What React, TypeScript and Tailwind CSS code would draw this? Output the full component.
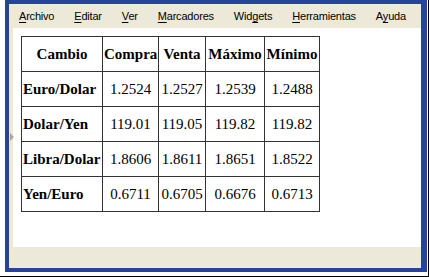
const menu: { label: string; key: number }[] = [
  { label: 'Archivo', key: 0 },
  { label: 'Editar', key: 0 },
  { label: 'Ver', key: 0 },
  { label: 'Marcadores', key: 0 },
  { label: 'Widgets', key: 3 },
  { label: 'Herramientas', key: 0 },
  { label: 'Ayuda', key: 1 },
];

const rows = [
  ['Euro/Dolar', '1.2524', '1.2527', '1.2539', '1.2488'],
  ['Dolar/Yen', '119.01', '119.05', '119.82', '119.82'],
  ['Libra/Dolar', '1.8606', '1.8611', '1.8651', '1.8522'],
  ['Yen/Euro', '0.6711', '0.6705', '0.6676', '0.6713'],
];

const headers = ['Cambio', 'Compra', 'Venta', 'Máximo', 'Mínimo'];

export default function App() {
  return (
    <div className="w-[429px] h-[277px] bg-white border-r border-b border-black overflow-hidden">
      <div className="ml-[5px] w-[422px] h-[272px] flex flex-col border-t-4 border-l-4 border-b-4 border-r-[6px] border-[#26449c] shadow-[inset_0_0_0_1px_#3558b4]">
        {/* Menu bar */}
        <div className="h-[24px] pt-[1px] bg-[#ece9d8] flex items-center gap-[20px] pl-[10px] text-[11px] tracking-[-0.2px] text-black font-['Liberation_Sans',sans-serif]">
          {menu.map((m) => (
            <span key={m.label} className="leading-none">
              {m.label.slice(0, m.key)}
              <span className="underline underline-offset-2">{m.label[m.key]}</span>
              {m.label.slice(m.key + 1)}
            </span>
          ))}
        </div>

        {/* Page */}
        <div className="relative flex-1 bg-[#ece9d8] pl-[4px] flex">
          <span className="absolute left-[1px] top-[105px] w-0 h-0 border-y-[4px] border-y-transparent border-l-[4px] border-l-[#a8a8a8]" />
          <div className="flex-1 bg-white p-[8px] font-['Liberation_Serif',serif] text-[15px] text-black">
            <table className="w-[298px] table-fixed border-collapse border border-[#333]">
              <colgroup>
                <col className="w-[81px]" />
                <col className="w-[56px]" />
                <col className="w-[47px]" />
                <col className="w-[59px]" />
                <col className="w-[55px]" />
              </colgroup>
              <thead>
                <tr className="h-[35px]">
                  {headers.map((h) => (
                    <th key={h} className="border border-[#333] px-[1px] font-bold text-center whitespace-nowrap">
                      {h}
                    </th>
                  ))}
                </tr>
              </thead>
              <tbody>
                {rows.map((r) => (
                  <tr key={r[0]} className="h-[35px]">
                    {r.map((c, i) => (
                      <td
                        key={i}
                        className={
                          i === 0
                            ? 'border border-[#333] px-[1px] font-bold text-left whitespace-nowrap'
                            : 'border border-[#333] px-[1px] text-center'
                        }
                      >
                        {c}
                      </td>
                    ))}
                  </tr>
                ))}
              </tbody>
            </table>
          </div>
        </div>

        {/* Bottom strip */}
        <div className="h-[21px] bg-[#ece9d8]" />
      </div>
    </div>
  );
}
